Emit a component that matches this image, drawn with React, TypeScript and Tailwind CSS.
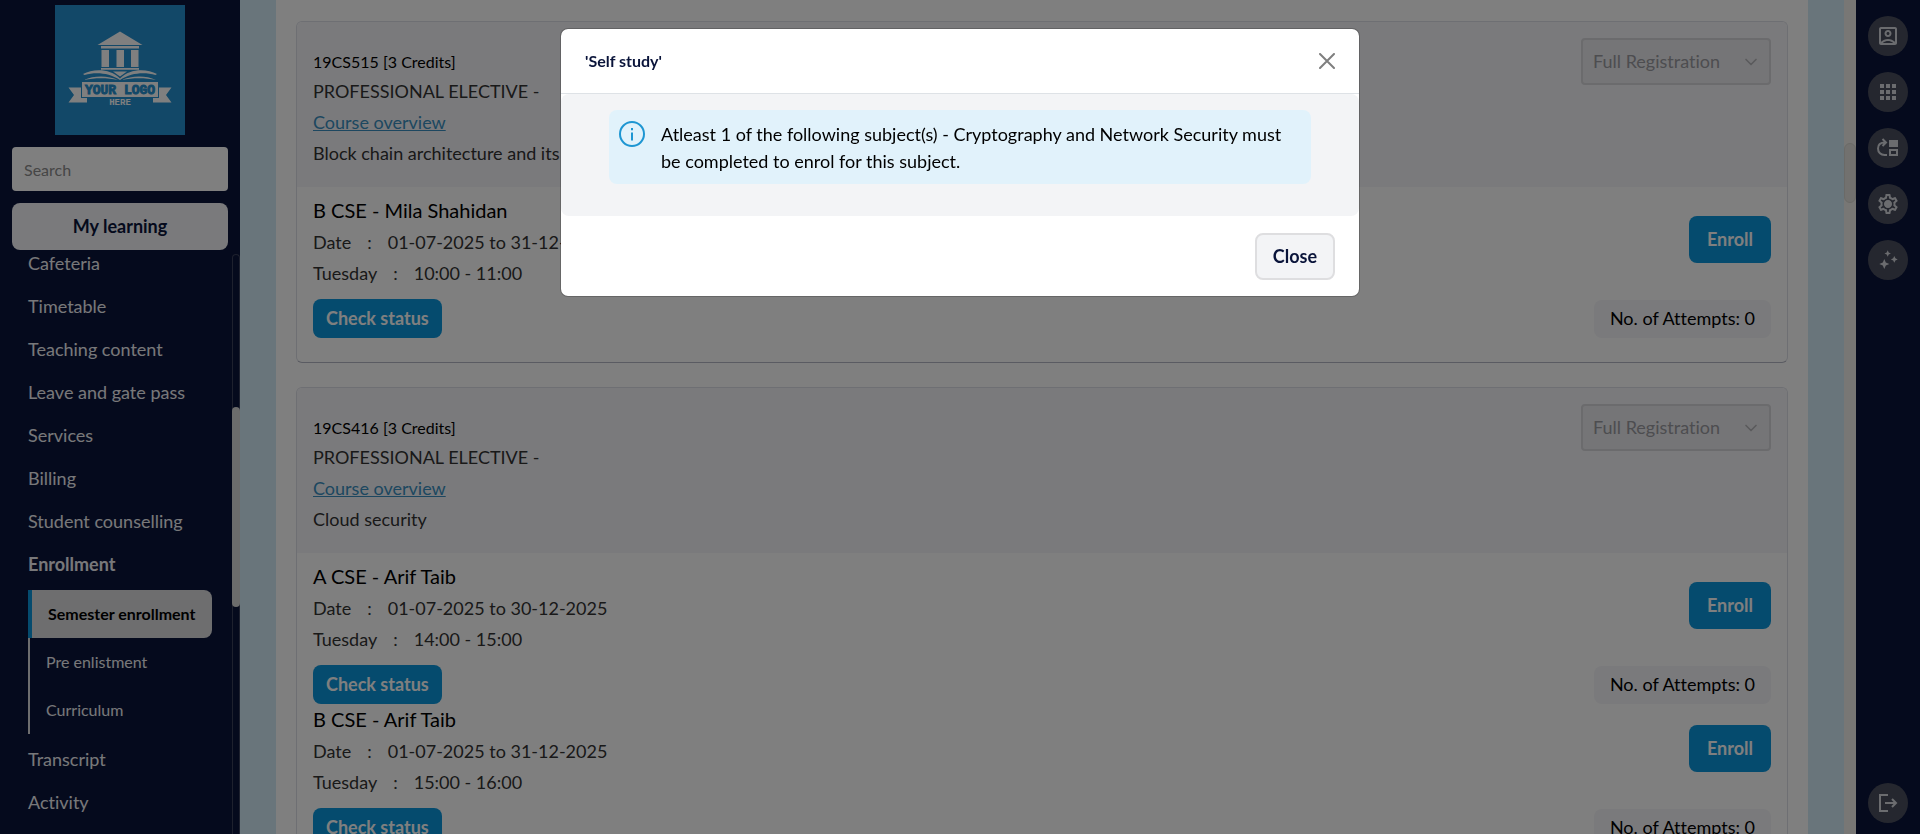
import React from "react";
import { ChevronDown } from "lucide-react";
import {
  MdApps,
  MdOutlineAccountBox,
  MdOutlineSettings,
} from "react-icons/md";

type Section = {
  title: string;
  date: string;
  time: string;
};

type Course = {
  code: string;
  name: string;
  sections: Section[];
};

const courses: Course[] = [
  {
    code: "19CS515",
    name: "Block chain architecture and its applications",
    sections: [
      {
        title: "B CSE - Mila Shahidan",
        date: "01-07-2025 to 31-12-2025",
        time: "10:00 - 11:00",
      },
    ],
  },
  {
    code: "19CS416",
    name: "Cloud security",
    sections: [
      {
        title: "A CSE - Arif Taib",
        date: "01-07-2025 to 30-12-2025",
        time: "14:00 - 15:00",
      },
      {
        title: "B CSE - Arif Taib",
        date: "01-07-2025 to 31-12-2025",
        time: "15:00 - 16:00",
      },
    ],
  },
];

const menuTop = [
  "Cafeteria",
  "Timetable",
  "Teaching content",
  "Leave and gate pass",
  "Services",
  "Billing",
  "Student counselling",
];
const menuBottom = ["Transcript", "Activity"];

const Logo: React.FC = () => (
  <svg viewBox="0 0 130 130" className="size-[130px] bg-[#2490d0]" aria-label="Your logo here">
    <g fill="#ffffff">
      {/* Building */}
      <path d="M65 26.500 87.500 40h-45z" />
      <path d="M46 41h38v2.500H46zM46.500 45h7.500v17h-7.500zM61.500 45h7.500v17h-7.500zM76 45h7.500v17H76zM46 63h38v1.800H46z" />
      <path d="M58 66.500h14l-7 5z" />
      {/* Open book */}
      <path d="M28 69c10-5.500 27-6 37 4.500 10-10.500 27-10 37-4.500l-1.500 1c-11-3-24-2.500-35.500 5-11.500-7.500-24.500-8-35.500-5z" />
      <path d="M29 75c10-5 25-4.500 34 0-10-2-22-2.500-34 0zM101 75c-10-5-25-4.500-34 0 10-2 22-2.500 34 0z" />
      {/* Ribbon */}
      <path d="M27 77h76v15H27z" />
      <path d="M13.500 82.500H26V93h6v4.500H13.500l5.500-7.500zM116.500 82.500H104V93h-6v4.500h18.500L111 90z" />
    </g>
    <text
      x="65"
      y="89"
      textAnchor="middle"
      fill="#2490d0"
      stroke="#2490d0"
      strokeWidth="0.9"
      className="font-['Liberation_Mono',monospace] text-[13px] font-bold"
    >
      YOUR LOGO
    </text>
    <text
      x="65"
      y="100"
      textAnchor="middle"
      fill="#ffffff"
      className="font-['Liberation_Mono',monospace] text-[9px] font-bold"
    >
      HERE
    </text>
  </svg>
);

const SwitchIcon: React.FC = () => (
  <svg viewBox="0 0 24 24" className="size-6" fill="currentColor">
    <path d="M13 4h9v7h-9zM13 13v7h9v-7zm7 5h-5v-3h5z" />
    <path
      d="M11 19H8.500C5 19 2 16.500 2 12.500S4.500 6.500 9 6.500M6.500 3 10 6.500 6.500 10"
      fill="none"
      stroke="currentColor"
      strokeWidth="2"
    />
  </svg>
);

const SettingsIcon: React.FC = () => (
  <svg viewBox="0 0 24 24" className="size-6" fill="currentColor">
    <MdOutlineSettings size={24} />
    <circle cx="12" cy="12" r="3.500" />
  </svg>
);

const SparkIcon: React.FC = () => (
  <svg viewBox="0 0 24 24" className="size-6" fill="currentColor">
    <path d="m8.300 11 1.500 3.500 3.500 1.500-3.500 1.500L8.300 21l-1.500-3.500L3.300 16l3.500-1.500zM18.300 8l1.100 2.300 2.300 1.100-2.300 1.100-1.100 2.300-1.100-2.300-2.300-1.100 2.300-1.100zM11.700 2.300l1 2.200 2.200 1-2.200 1-1 2.200-1-2.200-2.200-1 2.200-1z" />
  </svg>
);

const ExitIcon: React.FC = () => (
  <svg viewBox="0 0 24 24" className="size-6" fill="none" stroke="currentColor" strokeWidth="2">
    <path d="M12 4H4v16h8M9 12h11M16 8l4 4-4 4" />
  </svg>
);

const RailButton: React.FC<{ label: string; children: React.ReactNode }> = ({
  label,
  children,
}) => (
  <button
    type="button"
    aria-label={label}
    className="flex size-10 items-center justify-center rounded-full bg-[#4b4f5e] text-[#d6d8de]"
  >
    {children}
  </button>
);

const Sidebar: React.FC = () => (
  <aside className="flex w-60 shrink-0 flex-col bg-[#0a143a] text-[#f0f0f4]">
    <div className="flex justify-center pt-[5px]">
      <Logo />
    </div>
    <div className="flex flex-col gap-3 px-3 pt-3">
      <input
        type="text"
        aria-label="Search"
        placeholder="Search"
        className="h-11 w-full rounded-[4px] bg-white px-3 text-[16px] text-black placeholder:text-[#8c8c8c]"
      />
      <button
        type="button"
        className="h-[47px] w-full rounded-lg bg-[#f4f4f8] text-[18px] font-bold text-[#0a143a]"
      >
        My learning
      </button>
    </div>
    <div className="flex min-h-0 flex-1">
      <nav className="min-w-0 flex-1 overflow-hidden pl-7">
        <div className="-mt-2">
          {menuTop.map((item) => (
            <a key={item} href="#" className="block text-[18px] leading-[43px]">
              {item}
            </a>
          ))}
          <a href="#" className="block text-[18px] leading-[43px] font-bold">
            Enrollment
          </a>
          <div className="my-1 mr-5 text-[16px] leading-[48px]">
            <a
              href="#"
              className="block rounded-r-lg border-l-4 border-[#0a96dc] bg-[#dcdcde] pl-4 font-bold text-black"
            >
              Semester enrollment
            </a>
            <a href="#" className="block border-l-2 border-[#dcdcde] pl-4">
              Pre enlistment
            </a>
            <a href="#" className="block border-l-2 border-[#dcdcde] pl-4">
              Curriculum
            </a>
          </div>
          {menuBottom.map((item) => (
            <a key={item} href="#" className="block text-[18px] leading-[43px]">
              {item}
            </a>
          ))}
        </div>
      </nav>
      {/* Menu scrollbar */}
      <div className="mt-1 w-2 rounded-t-full border-x border-t border-[#3c425c] pt-[152px]">
        <div className="-mx-px h-[200px] rounded-full bg-[#d8d8d8]" />
      </div>
    </div>
  </aside>
);

const SectionRow: React.FC<{ section: Section }> = ({ section }) => (
  <div className="flex justify-between">
    <div className="text-[18px] leading-[31px] text-[#333333]">
      <h3 className="mb-0.5 text-[20px] leading-[30px] text-black">{section.title}</h3>
      <p className="flex gap-4">
        <span>Date</span>
        <span>:</span>
        <span>{section.date}</span>
      </p>
      <p className="flex gap-4">
        <span>Tuesday</span>
        <span>:</span>
        <span>{section.time}</span>
      </p>
      <button
        type="button"
        className="mt-[10px] block h-[39px] rounded-lg bg-[#0a96dc] px-[13px] font-bold text-white"
      >
        Check status
      </button>
    </div>
    <div className="flex flex-col items-end justify-between pt-[21px]">
      <button
        type="button"
        className="h-[47px] rounded-lg bg-[#0a96dc] px-[18px] text-[18px] font-bold text-white"
      >
        Enroll
      </button>
      <div className="rounded-lg bg-[#f4f4f8] px-4 pb-0.5 text-[18px] leading-9 text-black">
        No. of Attempts: 0
      </div>
    </div>
  </div>
);

const CourseCard: React.FC<{ course: Course }> = ({ course }) => (
  <article className="overflow-hidden rounded-md border border-[#dcdee6] border-b-[#b4b7c4] bg-white">
    <div className="flex justify-between bg-[#f5f5f9] px-4 pt-4 pb-[18px]">
      <div className="pt-[10px] text-[18px] leading-[31px] text-[#333333]">
        <h2 className="text-[16px] leading-7 text-black">{course.code} [3 Credits]</h2>
        <p>PROFESSIONAL ELECTIVE -</p>
        <p>
          <a href="#" className="text-[#3a8fc0] underline">
            Course overview
          </a>
        </p>
        <p>{course.name}</p>
      </div>
      <div className="relative h-[47px] w-[190px]">
        <select
          disabled
          aria-label="Registration type"
          className="size-full appearance-none rounded-[4px] border-2 border-[#d6d6da] bg-[#ebebef] pl-[10px] text-[18px] text-[#9a9aa0] opacity-100"
        >
          <option>Full Registration</option>
        </select>
        <ChevronDown className="absolute top-[14px] right-[10px] size-5 text-[#b4b4b8]" />
      </div>
    </div>
    <div className="px-4 pt-2 pb-6">
      {course.sections.map((section) => (
        <SectionRow key={section.title} section={section} />
      ))}
    </div>
  </article>
);

const PrerequisiteDialog: React.FC = () => (
  <div className="fixed inset-0 bg-black/50">
    <div
      role="dialog"
      aria-modal="true"
      aria-labelledby="dialog-title"
      className="mx-auto mt-7 max-w-[800px] rounded-lg border border-black/20 bg-white bg-clip-padding"
    >
      <div className="flex h-[65px] items-center justify-between border-b border-[#dee2e6] px-6">
        <h2 id="dialog-title" className="text-[16px] font-bold text-[#0a143a]">
          &#39;Self study&#39;
        </h2>
        <button type="button" aria-label="Close dialog" className="text-[#7f7f7f]">
          <svg viewBox="0 0 16 16" className="size-4" stroke="currentColor" strokeWidth="2" strokeLinecap="round">
            <path d="m1 1 14 14M15 1 1 15" />
          </svg>
        </button>
      </div>
      <div className="rounded-lg bg-[#f3f4f6] px-12 pt-4 pb-8">
        <div className="flex gap-4 rounded-lg bg-[#e1f2fb] px-[10px] pt-[11px] pb-[9px]">
          <svg viewBox="0 0 26 26" className="size-[26px] shrink-0 text-[#1e96d2]" fill="none" stroke="currentColor" strokeWidth="2">
            <circle cx="13" cy="13" r="12" />
            <path d="M13 11.500v8M13 7v2.200" />
          </svg>
          <p className="text-[18px] leading-[27px] text-black">
            Atleast 1 of the following subject(s) - Cryptography and Network Security must be
            completed to enrol for this subject.
          </p>
        </div>
      </div>
      <div className="flex justify-end px-6 pt-[17px] pb-4">
        <button
          type="button"
          className="h-[47px] rounded-lg border-2 border-[#dedee0] bg-[#f3f4f6] px-4 text-[18px] font-bold text-[#0a143a]"
        >
          Close
        </button>
      </div>
    </div>
  </div>
);

const App: React.FC = () => {
  return (
    <div className="flex h-screen overflow-hidden bg-[#d2ebf7] font-[Lato,sans-serif] [font-variant-ligatures:none]">
      <Sidebar />

      <main className="min-w-0 flex-1 overflow-hidden px-9">
        <div className="flex min-h-full flex-col gap-6 bg-white px-5 pt-[21px]">
          {courses.map((course) => (
            <CourseCard key={course.code} course={course} />
          ))}
        </div>
      </main>

      {/* Page scrollbar */}
      <div className="w-3 shrink-0 bg-[#f0efea] pt-[143px]">
        <div className="h-[60px] rounded-md border border-[#d6d5cf] bg-[#e4e3de]" />
      </div>

      <aside className="flex w-16 shrink-0 flex-col items-center gap-4 bg-[#0a143a] pt-4 pb-[11px]">
        <RailButton label="Profile">
          <MdOutlineAccountBox className="size-6" />
        </RailButton>
        <RailButton label="Apps">
          <MdApps className="size-6" />
        </RailButton>
        <RailButton label="Switch view">
          <SwitchIcon />
        </RailButton>
        <RailButton label="Settings">
          <SettingsIcon />
        </RailButton>
        <RailButton label="Assistant">
          <SparkIcon />
        </RailButton>
        <div className="mt-auto">
          <RailButton label="Log out">
            <ExitIcon />
          </RailButton>
        </div>
      </aside>

      <PrerequisiteDialog />
    </div>
  );
};

export default App;
